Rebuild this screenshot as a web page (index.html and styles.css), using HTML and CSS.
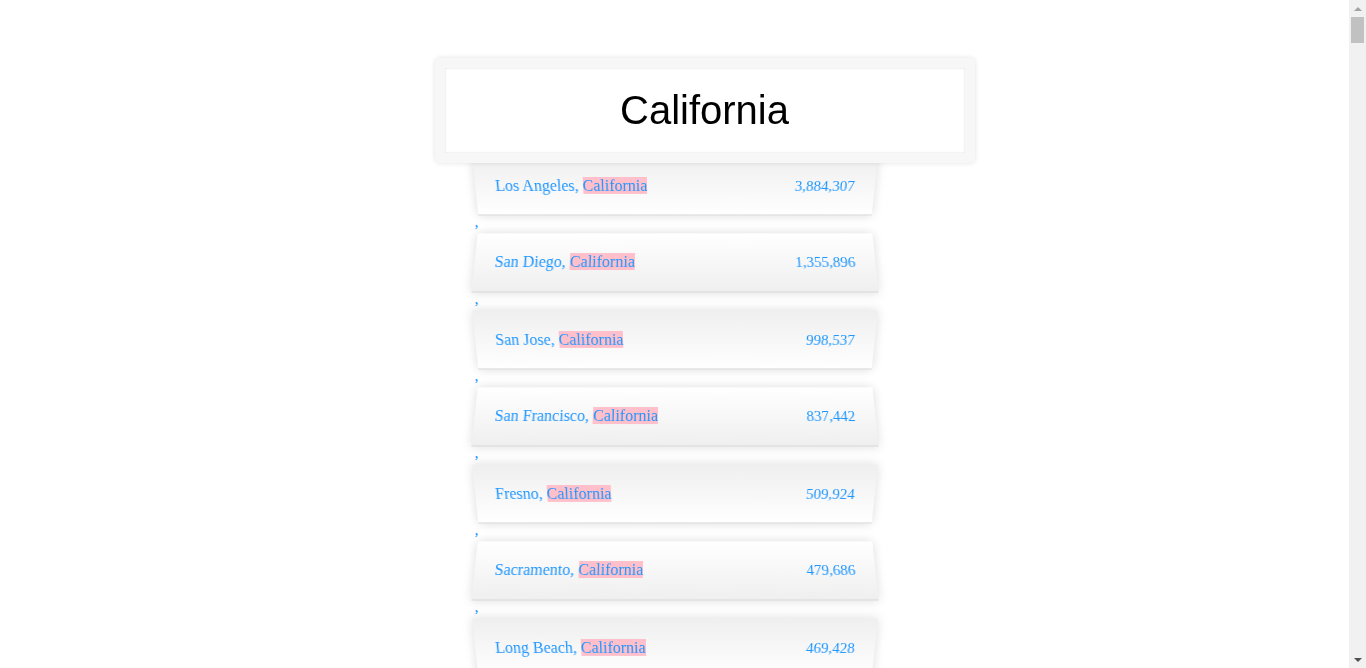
FILE: index.html
```html
<!DOCTYPE html>
<html lang="en">
<head>
<meta charset="UTF-8">
<title>Type Ahead</title>
<link rel="stylesheet" href="styles.css">
</head>
<body>
<main class="page">
<form class="search-form">
  <input type="text" class="search" placeholder="City or State" value="California">
  <ul class="suggestions"><li><span class="name">Los Angeles, <span class="hl">California</span></span><span class="population">3,884,307</span></li>,<li><span class="name">San Diego, <span class="hl">California</span></span><span class="population">1,355,896</span></li>,<li><span class="name">San Jose, <span class="hl">California</span></span><span class="population">998,537</span></li>,<li><span class="name">San Francisco, <span class="hl">California</span></span><span class="population">837,442</span></li>,<li><span class="name">Fresno, <span class="hl">California</span></span><span class="population">509,924</span></li>,<li><span class="name">Sacramento, <span class="hl">California</span></span><span class="population">479,686</span></li>,<li><span class="name">Long Beach, <span class="hl">California</span></span><span class="population">469,428</span></li></ul>
</form>
</main>
<div class="scrollbar" aria-hidden="true">
  <div class="sb-button"><span class="arrow-up"></span></div>
  <div class="sb-track"><div class="sb-thumb"></div></div>
  <div class="sb-button"><span class="arrow-down"></span></div>
</div>
</body>
</html>
```
FILE: styles.css
```css
html {
  background: #ffffff;
  font-family: "Liberation Serif", "Times New Roman", serif;
  font-size: 16px;
}

body {
  margin: 0;
  height: 668px;
  display: flex;
  overflow: hidden;
}

.page {
  flex: 1;
  min-width: 0;
  padding-top: 58px;
  overflow: hidden;
}

.scrollbar {
  width: 17px;
  flex: none;
  background: #f1f1f1;
  display: flex;
  flex-direction: column;
}

.sb-button {
  height: 17px;
  flex: none;
  display: flex;
  align-items: center;
  justify-content: center;
}

.arrow-up {
  width: 0;
  height: 0;
  border-left: 4px solid transparent;
  border-right: 4px solid transparent;
  border-bottom: 4px solid #a3a3a3;
}

.arrow-down {
  width: 0;
  height: 0;
  border-left: 4px solid transparent;
  border-right: 4px solid transparent;
  border-top: 4px solid #505050;
}

.sb-track {
  flex: 1;
  padding: 0 2px;
}

.sb-thumb {
  height: 26px;
  background: #c1c1c1;
}

.search-form {
  max-width: 400px;
  margin: 0 auto;
}

.search {
  display: block;
  box-sizing: content-box;
  width: 120%;
  margin: 0 0 -9px -10%;
  padding: 20px;
  position: relative;
  z-index: 2;
  text-align: center;
  outline: 0;
  border: 10px solid #f7f7f7;
  border-radius: 5px;
  font-family: "Liberation Sans", Arial, sans-serif;
  font-size: 40px;
  color: #000;
  background: #fff;
  box-shadow: 0 0 5px rgba(0, 0, 0, 0.12), inset 0 0 2px rgba(0, 0, 0, 0.19);
}

.suggestions {
  margin: 0;
  padding: 0;
  position: relative;
  color: #1e96ff;
}

.suggestions li {
  list-style: none;
  border-bottom: 1px solid #d8d8d8;
  box-shadow: 0 0 10px rgba(0, 0, 0, 0.14);
  margin: 0;
  padding: 20px;
  display: flex;
  justify-content: space-between;
  align-items: baseline;
}

.suggestions li:nth-child(even) {
  transform: perspective(100px) rotateX(3deg) translateY(2px) scale(1.001);
  background: linear-gradient(to bottom, #ffffff 0%, #efefef 100%);
}

.suggestions li:nth-child(odd) {
  transform: perspective(100px) rotateX(-3deg) translateY(3px);
  background: linear-gradient(to top, #ffffff 0%, #efefef 100%);
}

.population {
  font-size: 15px;
}

.hl {
  background: pink;
}
```
